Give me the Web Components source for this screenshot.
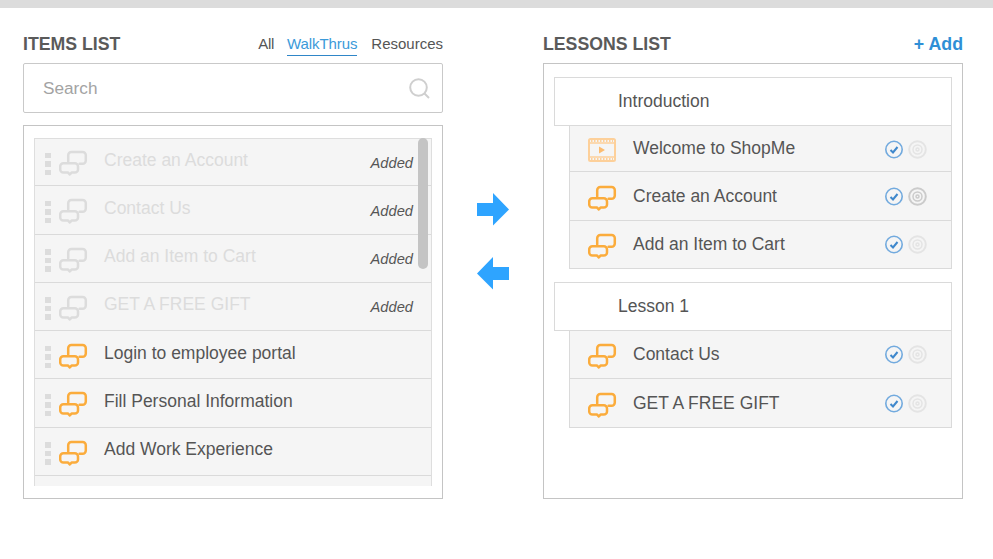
<!DOCTYPE html>
<html>
<head>
<meta charset="utf-8">
<title>Lessons</title>
<style>
  html, body { margin: 0; background: #fff; }
  body { font-family: "Liberation Sans", Arial, sans-serif; color: #555; overflow: hidden; }
</style>
</head>
<body>
<builder-page>
  <panel-head slot="left" title="ITEMS LIST"><tab-links></tab-links></panel-head>
  <search-box slot="left"></search-box>
  <items-box slot="left">
    <item-row added label="Create an Account"></item-row>
    <item-row added label="Contact Us"></item-row>
    <item-row added label="Add an Item to Cart"></item-row>
    <item-row added label="GET A FREE GIFT"></item-row>
    <item-row label="Login to employee portal"></item-row>
    <item-row label="Fill Personal Information"></item-row>
    <item-row label="Add Work Experience"></item-row>
    <item-row label=""></item-row>
  </items-box>
  <panel-head slot="right" title="LESSONS LIST"><add-link></add-link></panel-head>
  <lessons-box slot="right">
    <lesson-group title="Introduction">
      <lesson-row kind="video" label="Welcome to ShopMe" h="46"></lesson-row>
      <lesson-row label="Create an Account" target="dark" h="49"></lesson-row>
      <lesson-row label="Add an Item to Cart" h="48"></lesson-row>
    </lesson-group>
    <lesson-group title="Lesson 1">
      <lesson-row label="Contact Us" h="48"></lesson-row>
      <lesson-row label="GET A FREE GIFT" h="49"></lesson-row>
    </lesson-group>
  </lessons-box>
</builder-page>

<script>
// small helper, every element has the same setup
function shadow(el, html) {
  const sr = el.attachShadow({ mode: "open" });
  sr.innerHTML = html;
  return sr;
}

const CHAT_ICON = `
  <svg width="29" height="27" viewBox="0 0 29 27" fill="none" stroke="currentColor" stroke-width="2.500" stroke-linecap="round" stroke-linejoin="round">
    <path d="M9.200 12.500V6.200a3.200 3.200 0 0 1 3.200-3.200h11.200a3.200 3.200 0 0 1 3.200 3.200v5.400a3.200 3.200 0 0 1-3.200 3.200h-3"/>
    <path d="M5.400 14.200h10.400a3.200 3.200 0 0 1 3.200 3.200v3a3.200 3.200 0 0 1-3.200 3.200h-3.300l-1.700 1.900-1.700-1.900h-4.700a3.200 3.200 0 0 1-3.200-3.200v-3a3.200 3.200 0 0 1 3.200-3.200z"/>
  </svg>`;

const VIDEO_ICON = `
  <svg width="28" height="24" viewBox="0 0 28 24" fill="none">
    <rect x="1" y="1" width="26" height="22" rx="1.500" stroke="#fdd09a" stroke-width="2"/>
    <path d="M2 5h24M2 19h24" stroke="#fdd09a" stroke-width="1.500"/>
    <path d="M3 3h22M3 21h22" stroke="#fdd09a" stroke-width="2" stroke-dasharray="1.500 1.500"/>
    <path d="M11 8.500l6 3.500-6 3.500z" fill="#fcbc70"/>
  </svg>`;

class BuilderPage extends HTMLElement {
  constructor() {
    super();
    shadow(this, `
      <style>
        :host { display: block; width: 993px; height: 559px; box-sizing: border-box; border-top: 8px solid #dcdcdc; background: #fff; }
        .cols { display: flex; padding: 24px 30px 0 23px; }
        .col { width: 420px; display: flex; flex-direction: column; }
        .mid { width: 100px; display: flex; flex-direction: column; align-items: center; gap: 31px; padding-top: 161px; box-sizing: border-box; }
        svg { display: block; }
      </style>
      <div class="cols">
        <div class="col"><slot name="left"></slot></div>
        <div class="mid">
          <svg width="34" height="33" viewBox="0 0 34 33"><path d="M1 10h16V0l16 16.500-16 16V23H1z" fill="#2ea4ff"/></svg>
          <svg width="34" height="33" viewBox="0 0 34 33"><path d="M33 10H17V0L1 16.500l16 16V23h16z" fill="#2ea4ff"/></svg>
        </div>
        <div class="col"><slot name="right"></slot></div>
      </div>`);
  }
}

class PanelHead extends HTMLElement {
  constructor() {
    super();
    shadow(this, `
      <style>
        :host { display: flex; justify-content: space-between; align-items: flex-start; height: 31px; }
        h2 { margin: 0; padding-top: 1.500px; font: bold 17.700px/20px "Liberation Sans", Arial, sans-serif; color: #5a5a5a; }
      </style>
      <h2></h2><slot></slot>`);
  }
  connectedCallback() {
    this.shadowRoot.querySelector("h2").textContent = this.getAttribute("title");
    this.removeAttribute("title");
  }
}

class TabLinks extends HTMLElement {
  constructor() {
    super();
    shadow(this, `
      <style>
        :host { display: flex; gap: 14px; font-size: 15px; line-height: 18px; color: #555; padding-top: 3px; }
        span { height: 21px; box-sizing: border-box; }
        .all { letter-spacing: -0.300px; }
        .on { color: #3b9ad9; border-bottom: 1px solid #2f86c8; margin-left: -1px; letter-spacing: -0.100px; }
      </style>
      <span class="all">All</span><span class="on">WalkThrus</span><span>Resources</span>`);
  }
}

class AddLink extends HTMLElement {
  constructor() {
    super();
    shadow(this, `
      <style>
        :host { display: block; font: bold 17.800px/20px "Liberation Sans", Arial, sans-serif; color: #2f8fd6; padding-top: 2px; }
      </style>+ Add`);
  }
}

class SearchBox extends HTMLElement {
  constructor() {
    super();
    shadow(this, `
      <style>
        :host { display: flex; align-items: center; justify-content: space-between; height: 50px; box-sizing: border-box; border: 1px solid #c9c9c9; border-radius: 2px; padding: 0 12px 0 19px; margin-bottom: 12px; }
        span { font-size: 17.200px; color: #a3a3a3; }
        svg { display: block; }
      </style>
      <span>Search</span>
      <svg width="21" height="21" viewBox="0 0 21 21" fill="none" stroke="#cfcfcf">
        <circle cx="9.500" cy="9.500" r="8.300" stroke-width="2"/>
        <path d="M15.500 15.500l4.500 4.500" stroke-width="2"/>
      </svg>`);
  }
}

class ItemsBox extends HTMLElement {
  constructor() {
    super();
    shadow(this, `
      <style>
        :host { display: block; height: 374px; box-sizing: border-box; border: 1px solid #c4c4c4; padding: 12px 10px; position: relative; }
        .clip { height: 348px; overflow: hidden; border-left: 1px solid #dedede; border-right: 1px solid #dedede; box-shadow: inset 0 1px 0 #dedede; box-sizing: border-box; background: #f5f5f5; }
        .thumb { position: absolute; left: 394px; top: 12px; width: 10px; height: 131px; border-radius: 5px; background: #c4c4c4; }
      </style>
      <div class="clip"><slot></slot></div>
      <div class="thumb"></div>`);
  }
}

class ItemRow extends HTMLElement {
  constructor() {
    super();
    shadow(this, `
      <style>
        :host { display: flex; align-items: flex-start; height: 48.300px; box-sizing: border-box; border-bottom: 1px solid #dadada; position: relative; }
        .grip { width: 6px; margin: 14.500px 0 0 10px; display: flex; flex-direction: column; gap: 3px; }
        .grip i { display: block; height: 5.500px; background: #dcdcdc; }
        .icon { margin: 11px 0 0 8px; color: #fbac3c; height: 27px; }
        .icon svg { display: block; }
        .label { margin: 9.500px 0 0 16px; font-size: 17.500px; line-height: 24px; color: #555; white-space: nowrap; }
        .added { position: absolute; right: 18px; top: 15.500px; font-size: 14.700px; line-height: 18px; font-style: italic; color: #555; }
        :host([added]) .icon { color: #dcdcdc; }
        :host([added]) .label { color: #dcdcdc; }
      </style>
      <div class="grip"><i></i><i></i><i></i></div>
      <div class="icon">${CHAT_ICON}</div>
      <div class="label"></div>`);
  }
  connectedCallback() {
    const label = this.getAttribute("label");
    if (!label) {
      this.shadowRoot.querySelector(".grip").remove();
      this.shadowRoot.querySelector(".icon").remove();
    }
    this.shadowRoot.querySelector(".label").textContent = label;
    if (this.hasAttribute("added")) {
      const tag = document.createElement("div");
      tag.className = "added";
      tag.textContent = "Added";
      this.shadowRoot.appendChild(tag);
    }
  }
}

class LessonsBox extends HTMLElement {
  constructor() {
    super();
    shadow(this, `
      <style>
        :host { display: flex; flex-direction: column; gap: 13px; height: 436px; box-sizing: border-box; border: 1px solid #c4c4c4; padding: 13px 10px; }
      </style>
      <slot></slot>`);
  }
}

class LessonGroup extends HTMLElement {
  constructor() {
    super();
    shadow(this, `
      <style>
        :host { display: block; }
        .title { height: 49px; box-sizing: border-box; border: 1px solid #dadada; padding: 12px 0 0 63px; font-size: 17.500px; line-height: 22px; color: #555; background: #fff; }
        .rows { margin-left: 15px; border-left: 1px solid #dadada; border-right: 1px solid #dadada; background: #f5f5f5; }
      </style>
      <div class="title"></div>
      <div class="rows"><slot></slot></div>`);
  }
  connectedCallback() {
    this.shadowRoot.querySelector(".title").textContent = this.getAttribute("title");
    this.removeAttribute("title");
  }
}

class LessonRow extends HTMLElement {
  constructor() {
    super();
    shadow(this, `
      <style>
        :host { display: flex; align-items: center; box-sizing: border-box; border-bottom: 1px solid #dadada; position: relative; }
        :host([h="49"]) .icon { margin-top: 12px; }
        .icon { align-self: flex-start; width: 29px; margin: 11px 0 0 18px; color: #fbac3c; }
        :host([kind="video"]) .icon { margin-top: 12px; }
        .icon svg { display: block; }
        .label { flex: 1; margin: -2px 0 0 16px; font-size: 17.500px; line-height: 24px; color: #555; white-space: nowrap; }
        :host([h="49"]) .label { margin-top: 0; }
        .status { display: flex; gap: 4px; margin: 0 24px 0 0; }
        :host([kind="video"]) .status { margin-top: 1px; }
        .status svg { display: block; }
      </style>
      <div class="icon"></div>
      <div class="label"></div>
      <div class="status">
        <svg width="19" height="19" viewBox="0 0 19 19" fill="none">
          <circle cx="9" cy="9.500" r="8.200" stroke="#72aade" stroke-width="1.600"/>
          <path d="M5.500 10l2.500 2.500L12.500 7" stroke="#3f88cc" stroke-width="2"/>
        </svg>
        <svg class="target" width="19" height="19" viewBox="0 0 19 19" fill="none" stroke="#e4e4e4">
          <circle cx="9.500" cy="9.500" r="8.300" stroke-width="2"/>
          <circle cx="9.500" cy="9.500" r="4.500" stroke-width="1.500"/>
          <circle cx="9.500" cy="9.500" r="1.500" stroke-width="1.500"/>
        </svg>
      </div>`);
  }
  connectedCallback() {
    const sr = this.shadowRoot;
    this.style.height = (this.getAttribute("h") || 48) + "px";
    sr.querySelector(".icon").innerHTML = this.getAttribute("kind") === "video" ? VIDEO_ICON : CHAT_ICON;
    sr.querySelector(".label").textContent = this.getAttribute("label");
    if (this.getAttribute("target") === "dark") sr.querySelector(".target").setAttribute("stroke", "#cbcbcb");
  }
}

customElements.define("builder-page", BuilderPage);
customElements.define("panel-head", PanelHead);
customElements.define("tab-links", TabLinks);
customElements.define("add-link", AddLink);
customElements.define("search-box", SearchBox);
customElements.define("items-box", ItemsBox);
customElements.define("item-row", ItemRow);
customElements.define("lessons-box", LessonsBox);
customElements.define("lesson-group", LessonGroup);
customElements.define("lesson-row", LessonRow);
</script>
</body>
</html>
